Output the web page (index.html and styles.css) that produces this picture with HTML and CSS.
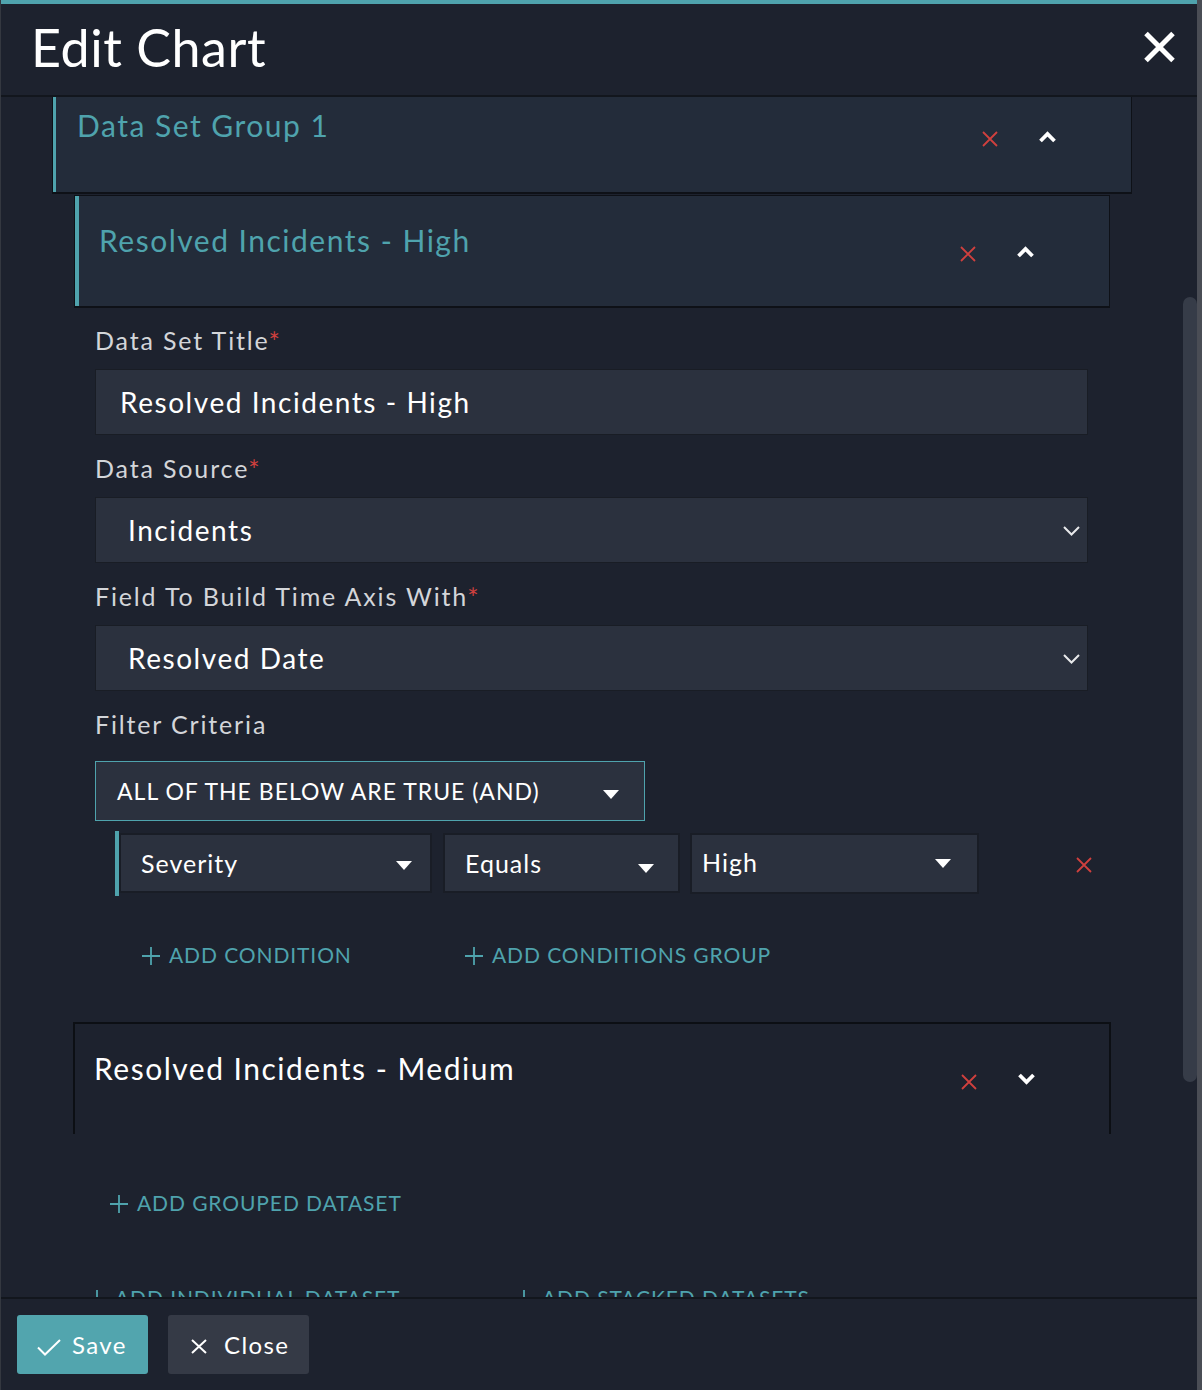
FILE: index.html
```html
<!DOCTYPE html>
<html lang="en">
<head>
<meta charset="utf-8">
<title>Edit Chart</title>
<link rel="stylesheet" href="styles.css">
</head>
<body>
<div class="modal">
  <header class="modal-head">
    <h1 class="modal-title">Edit Chart</h1>
    <svg class="head-close" width="33" height="32" viewBox="0 0 33 32"><path d="M3 2.5 L30 29.5 M30 2.5 L3 29.5" stroke="#fff" stroke-width="5" fill="none"/></svg>
  </header>

  <div class="modal-body">
    <div class="content">
      <section class="group-card">
        <div class="card-head group-head">
          <span class="card-title teal">Data Set Group 1</span>
          <div class="card-actions">
            <svg class="icon-remove" width="16" height="16" viewBox="0 0 16 16"><path d="M1 1 L15 15 M15 1 L1 15" stroke="#d0403e" stroke-width="1.8" fill="none"/></svg>
            <svg class="icon-chev" width="19" height="13" viewBox="0 0 19 13"><path d="M2.5 11 L9.5 4 L16.5 11" stroke="#fff" stroke-width="3.8" fill="none"/></svg>
          </div>
        </div>
      </section>

      <section class="dataset-card">
        <div class="card-head ds-head">
          <span class="card-title teal">Resolved Incidents - High</span>
          <div class="card-actions">
            <svg class="icon-remove" width="16" height="16" viewBox="0 0 16 16"><path d="M1 1 L15 15 M15 1 L1 15" stroke="#d0403e" stroke-width="1.8" fill="none"/></svg>
            <svg class="icon-chev" width="19" height="13" viewBox="0 0 19 13"><path d="M2.5 11 L9.5 4 L16.5 11" stroke="#fff" stroke-width="3.8" fill="none"/></svg>
          </div>
        </div>
      </section>

      <div class="ds-body">
        <div class="field-label">Data Set Title<span class="req">*</span></div>
        <div class="input">Resolved Incidents - High</div>

        <div class="field-label">Data Source<span class="req">*</span></div>
        <div class="select">
          <span>Incidents</span>
          <svg width="17" height="10" viewBox="0 0 17 10"><path d="M1 1 L8.5 8.5 L16 1" stroke="#e8e9eb" stroke-width="2" fill="none"/></svg>
        </div>

        <div class="field-label">Field To Build Time Axis With<span class="req">*</span></div>
        <div class="select">
          <span>Resolved Date</span>
          <svg width="17" height="10" viewBox="0 0 17 10"><path d="M1 1 L8.5 8.5 L16 1" stroke="#e8e9eb" stroke-width="2" fill="none"/></svg>
        </div>

        <div class="field-label filter-label">Filter Criteria</div>
        <div class="logic-select">
          <span>All of the below are true (AND)</span>
          <svg class="caret" width="16" height="9" viewBox="0 0 16 9"><path d="M0 0 H16 L8 9 Z" fill="#fff"/></svg>
        </div>

        <div class="cond-row">
          <div class="cond-group">
            <div class="cond-field cf-field">
              <span>Severity</span>
              <svg class="caret" width="16" height="9" viewBox="0 0 16 9"><path d="M0 0 H16 L8 9 Z" fill="#fff"/></svg>
            </div>
            <div class="cond-field cf-op">
              <span>Equals</span>
              <svg class="caret caret-low" width="16" height="9" viewBox="0 0 16 9"><path d="M0 0 H16 L8 9 Z" fill="#fff"/></svg>
            </div>
            <div class="cond-field cf-val">
              <span>High</span>
              <svg class="caret caret-high" width="16" height="9" viewBox="0 0 16 9"><path d="M0 0 H16 L8 9 Z" fill="#fff"/></svg>
            </div>
          </div>
          <svg class="cond-remove" width="16" height="16" viewBox="0 0 16 16"><path d="M1 1 L15 15 M15 1 L1 15" stroke="#d0403e" stroke-width="1.8" fill="none"/></svg>
        </div>

        <div class="add-row cond-links">
          <div class="link link-cond">
            <svg width="18" height="18" viewBox="0 0 18 18"><path d="M9 0 V18 M0 9 H18" stroke="#4fa3ad" stroke-width="1.8" fill="none"/></svg>
            <span>Add Condition</span>
          </div>
          <div class="link">
            <svg width="18" height="18" viewBox="0 0 18 18"><path d="M9 0 V18 M0 9 H18" stroke="#4fa3ad" stroke-width="1.8" fill="none"/></svg>
            <span>Add Conditions Group</span>
          </div>
        </div>
      </div>

      <section class="dataset-card collapsed">
        <div class="card-head ds-head">
          <span class="card-title">Resolved Incidents - Medium</span>
          <div class="card-actions">
            <svg class="icon-remove" width="16" height="16" viewBox="0 0 16 16"><path d="M1 1 L15 15 M15 1 L1 15" stroke="#d0403e" stroke-width="1.8" fill="none"/></svg>
            <svg class="icon-chev" width="19" height="13" viewBox="0 0 19 13"><path d="M2.5 2 L9.5 9 L16.5 2" stroke="#fff" stroke-width="3.8" fill="none"/></svg>
          </div>
        </div>
      </section>

      <div class="add-row grouped-links">
        <div class="link">
          <svg width="18" height="18" viewBox="0 0 18 18"><path d="M9 0 V18 M0 9 H18" stroke="#4fa3ad" stroke-width="1.8" fill="none"/></svg>
          <span>Add Grouped Dataset</span>
        </div>
      </div>

      <div class="add-row bottom-links">
        <div class="link link-indiv">
          <svg width="18" height="18" viewBox="0 0 18 18"><path d="M9 0 V18 M0 9 H18" stroke="#4fa3ad" stroke-width="1.8" fill="none"/></svg>
          <span>Add Individual Dataset</span>
        </div>
        <div class="link">
          <svg width="18" height="18" viewBox="0 0 18 18"><path d="M9 0 V18 M0 9 H18" stroke="#4fa3ad" stroke-width="1.8" fill="none"/></svg>
          <span>Add Stacked Datasets</span>
        </div>
      </div>
    </div>
    <div class="scroll-track"><div class="scroll-thumb"></div></div>
  </div>

  <footer class="modal-foot">
    <button class="btn btn-save">
      <svg width="24" height="17" viewBox="0 0 24 17"><path d="M1 8.5 L8 15.5 L23 1" stroke="#fff" stroke-width="2" fill="none"/></svg>
      <span>Save</span>
    </button>
    <button class="btn btn-close">
      <svg width="16" height="15" viewBox="0 0 16 15"><path d="M1 1 L15 14 M15 1 L1 14" stroke="#fff" stroke-width="2" fill="none"/></svg>
      <span>Close</span>
    </button>
  </footer>
</div>
</body>
</html>
```

FILE: styles.css
```css
* { box-sizing: border-box; }

html, body {
  margin: 0;
  padding: 0;
  background: #1d222e;
}

body {
  font-family: Lato, "Open Sans", "Liberation Sans", sans-serif;
  color: #fff;
}

.modal {
  width: 1202px;
  height: 1390px;
  display: flex;
  flex-direction: column;
  background: #1d222e;
  border-left: 1px solid #343840;
  border-right: 5px solid #4a4d55;
  overflow: hidden;
}

/* header */
.modal-head {
  flex: none;
  height: 97px;
  border-top: 4px solid #4fa3ad;
  border-bottom: 2px solid #12161d;
  display: flex;
  align-items: flex-start;
  justify-content: space-between;
  padding: 0 21px 0 30px;
}

.modal-title {
  margin: 12px 0 0;
  font-size: 52px;
  line-height: 62px;
  font-weight: 400;
  letter-spacing: 0.55px;
  color: #fff;
}

.head-close {
  margin-top: 27px;
}

/* body */
.modal-body {
  flex: 1;
  min-height: 0;
  display: flex;
}

.content {
  flex: 1;
  min-width: 0;
  overflow: hidden;
}

.scroll-track {
  flex: none;
  width: 14px;
}

.scroll-thumb {
  margin-top: 200px;
  height: 785px;
  border-radius: 7px;
  background: #363c48;
}

/* cards */
.group-card {
  margin-left: 51px;
  width: 1080px;
  height: 97px;
  background: #232c3a;
  border: 1px solid #0e1117;
  border-top: 0;
  border-bottom-width: 2px;
  box-shadow: inset 3px 0 0 #4fa3ad;
}

.dataset-card {
  margin: 1px 0 0 73px;
  width: 1036px;
  height: 113px;
  background: #232c3a;
  border: 1px solid #0e1117;
  border-bottom-width: 2px;
  box-shadow: inset 4px 0 0 #4fa3ad;
}

.dataset-card.collapsed {
  margin: 55px 0 0 72px;
  width: 1038px;
  height: 112px;
  background: transparent;
  border: 2px solid #0c0f14;
  border-bottom: 0;
  box-shadow: none;
}

.card-head {
  display: flex;
  align-items: flex-start;
}

.group-head {
  padding: 10px 74px 0 24px;
}

.ds-head {
  padding: 26px 74px 0 24px;
}

.collapsed .ds-head {
  padding: 26px 73px 0 19px;
}

.card-title {
  flex: 1;
  font-size: 30px;
  line-height: 36px;
  letter-spacing: 1.5px;
  color: #fff;
}

.teal {
  color: #4fa3ad;
}

.card-actions {
  display: flex;
  align-items: flex-start;
  gap: 40px;
  margin-top: 23px;
}

.icon-remove {
  margin-top: 1px;
}

/* form */
.ds-body {
  padding: 17px 0 0 94px;
}

.field-label {
  height: 30px;
  font-size: 25px;
  line-height: 30px;
  letter-spacing: 1.85px;
  color: #d3d5d9;
  margin-bottom: 14px;
}

.req {
  color: #d0403e;
  font-size: 27px;
  line-height: 0;
  letter-spacing: 0;
  margin-left: -1px;
  vertical-align: -2px;
}

.filter-label {
  margin-bottom: 22px;
}

.input,
.select {
  width: 993px;
  height: 66px;
  background: #2b313e;
  border: 1px solid #191d25;
  display: flex;
  align-items: center;
  font-size: 28px;
  letter-spacing: 1.55px;
  color: #fff;
  margin-bottom: 18px;
}

.input {
  padding-left: 24px;
}

.select {
  justify-content: space-between;
  padding: 0 7px 0 32px;
}

.select svg {
  margin-top: 2px;
}

.logic-select {
  width: 550px;
  height: 60px;
  border: 1px solid #4fa3ad;
  background: #2b313e;
  display: flex;
  align-items: center;
  justify-content: space-between;
  padding: 0 25px 0 21px;
  font-size: 23px;
  letter-spacing: 1px;
  text-transform: uppercase;
  color: #fff;
}

.logic-select .caret {
  margin-top: 6px;
}

.cond-row {
  margin: 10px 0 0 20px;
  display: flex;
  align-items: center;
}

.cond-group {
  display: flex;
  align-items: flex-start;
  gap: 11px;
  border-left: 4px solid #4fa3ad;
  padding: 2px 0 2px;
}

.cond-field {
  height: 60px;
  background: #2b313e;
  border: 2px solid #191d26;
  display: flex;
  align-items: center;
  justify-content: space-between;
  font-size: 25px;
  letter-spacing: 1px;
  color: #fff;
}

.cf-field {
  width: 313px;
  padding: 0 18px 0 20px;
}

.cf-op {
  width: 237px;
  padding: 0 24px 0 20px;
}

.cf-val {
  width: 289px;
  height: 61px;
  margin-left: -1px;
  padding: 0 26px 0 10px;
}

.cf-val span {
  margin-top: -3px;
}

.cond-field .caret {
  margin-top: 4px;
}

.cond-field .caret-low {
  margin-top: 10px;
}

.cond-field .caret-high {
  margin-top: 0;
}

.cond-remove {
  margin: 2px 0 0 97px;
}

/* add links */
.add-row {
  display: flex;
}

.link {
  display: flex;
  align-items: center;
  gap: 9px;
  color: #4fa3ad;
  font-size: 21px;
  line-height: 25px;
  letter-spacing: 0.9px;
  text-transform: uppercase;
  white-space: nowrap;
}

.link svg {
  flex: none;
  margin-top: 2px;
}

.cond-links {
  margin: 46px 0 0 47px;
}

.link-cond {
  width: 323px;
}

.grouped-links {
  margin: 56px 0 0 109px;
}

.bottom-links {
  margin: 70px 0 0 87px;
}

.link-indiv {
  width: 427px;
}

/* footer */
.modal-foot {
  flex: none;
  height: 93px;
  border-top: 2px solid #12161d;
  display: flex;
  align-items: flex-start;
  gap: 20px;
  padding: 16px 0 0 16px;
  background: #1d222e;
}

.btn {
  height: 59px;
  border: 0;
  border-radius: 3px;
  display: flex;
  align-items: center;
  font-family: Lato, "Open Sans", "Liberation Sans", sans-serif;
  font-size: 24px;
  letter-spacing: 1.4px;
  color: #fff;
  cursor: pointer;
}

.btn-save {
  width: 131px;
  background: #52a5ae;
  padding: 0 0 0 20px;
  gap: 11px;
}

.btn-save svg {
  margin-top: 5px;
}

.btn-close {
  width: 141px;
  background: #353a46;
  padding: 0 0 0 23px;
  gap: 17px;
}

.btn-close svg {
  margin-top: 3px;
}
```
